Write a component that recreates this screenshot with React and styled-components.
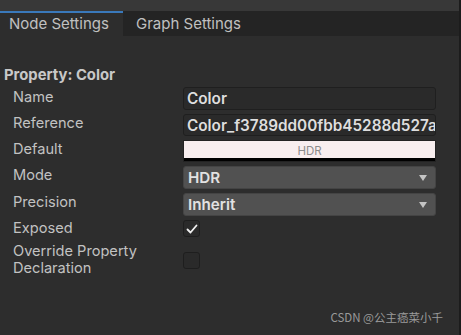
import React from 'react';
import styled, { createGlobalStyle } from 'styled-components';

const GlobalStyle = createGlobalStyle`
  html, body {
    margin: 0;
    padding: 0;
    background: #2d2d2d;
  }
  body {
    font-family: Inter, "Noto Sans", sans-serif;
  }
`;

const Window = styled.div`
  position: relative;
  width: 459px;
  height: 335px;
  background: #2d2d2d;
  border-right: 2px solid #1c1c1c;
  display: flex;
  flex-direction: column;
  overflow: hidden;
`;

const TopStrip = styled.div`
  height: 11px;
  background: #383838;
`;

const TabBar = styled.div`
  display: flex;
  height: 25px;
  background: #242424;
`;

const Tab = styled.div`
  box-sizing: border-box;
  width: ${(props) => props.width}px;
  padding-left: ${(props) => props.pad}px;
  display: flex;
  align-items: center;
  font-size: 15px;
  color: #c0c0c0;
  background: ${(props) => (props.active ? '#2d2d2d' : '#242424')};
  border-top: 2px solid ${(props) => (props.active ? '#3a79bb' : '#242424')};
  padding-bottom: 2px;
`;

const Content = styled.div`
  padding: 30px 0 0 4px;
  display: flex;
  flex-direction: column;
`;

const Heading = styled.div`
  font-size: 14.8px;
  font-weight: 700;
  color: #c8c8c8;
  line-height: 18px;
  margin-bottom: 3px;
`;

const Rows = styled.div`
  display: flex;
  flex-direction: column;
  gap: 4px;
`;

const Row = styled.div`
  display: flex;
  align-items: center;
  min-height: ${(props) => props.h || 22}px;
  margin-top: ${(props) => props.mt || 0}px;
`;

const Label = styled.div`
  box-sizing: border-box;
  width: 179px;
  padding-left: 9px;
  padding-right: 20px;
  font-size: 14.6px;
  line-height: 17px;
  color: #c2c2c2;
  margin-top: ${(props) => -(props.up || 0)}px;
`;

const TextField = styled.div`
  box-sizing: border-box;
  width: 253px;
  height: ${(props) => props.h || 23}px;
  background: #2a2a2a;
  border: 1px solid #1f1f1f;
  border-radius: 3px;
  padding: 0 3px;
  display: flex;
  align-items: center;
  font-size: 15.3px;
  font-weight: 600;
  color: #dedede;
  white-space: nowrap;
  overflow: hidden;
`;

const ColorField = styled.div`
  box-sizing: border-box;
  width: 253px;
  height: 22px;
  border: 1px solid #232323;
  display: flex;
  flex-direction: column;
`;

const Swatch = styled.div`
  flex: 1;
  background: #f8eeef;
  display: flex;
  justify-content: center;
  align-items: center;
  font-size: 11.5px;
  color: #8c8c8c;
  padding-top: 3px;
`;

const AlphaBar = styled.div`
  height: 4px;
  background: #000;
`;

const Dropdown = styled.div`
  box-sizing: border-box;
  width: 253px;
  height: 23px;
  background: #515151;
  border: 1px solid #444;
  border-radius: 3px;
  padding: 0 8px 0 4px;
  display: flex;
  align-items: center;
  justify-content: space-between;
  font-size: 15.2px;
  font-weight: 600;
  color: #e2e2e2;
`;

const Arrow = styled.span`
  width: 0;
  height: 0;
  border-left: 4.5px solid transparent;
  border-right: 4.5px solid transparent;
  border-top: 6px solid #c4c4c4;
`;

const Checkbox = styled.div`
  box-sizing: border-box;
  width: 17px;
  height: 17px;
  background: #2a2a2a;
  border: 1px solid #1e1e1e;
  border-radius: 3px;
  display: flex;
  align-items: center;
  justify-content: center;
`;

const Watermark = styled.div`
  position: absolute;
  right: 16px;
  bottom: 10px;
  font-size: 11.5px;
  color: #9a9a9a;
  font-family: "Noto Sans CJK SC", "Noto Sans", sans-serif;
`;

const Check = () => (
  <svg width="12" height="10" viewBox="0 0 12 10">
    <polyline points="1.5,5.5 4.5,8.5 10.5,1.5" fill="none" stroke="#f0f0f0" strokeWidth="1.8" strokeLinecap="round" strokeLinejoin="round" />
  </svg>
);

const App = () => {
  return (
    <>
      <GlobalStyle />
      <Window>
        <TopStrip />
        <TabBar>
          <Tab active width={123} pad={9}>Node Settings</Tab>
          <Tab width={137} pad={13}>Graph Settings</Tab>
        </TabBar>
        <Content>
          <Heading>Property: Color</Heading>
          <Rows>
            <Row>
              <Label up={3}>Name</Label>
              <TextField>Color</TextField>
            </Row>
            <Row>
              <Label up={3}>Reference</Label>
              <TextField h={22}>Color_f3789dd00fbb45288d527a3b8d6c5e41</TextField>
            </Row>
            <Row>
              <Label up={3}>Default</Label>
              <ColorField>
                <Swatch>HDR</Swatch>
                <AlphaBar />
              </ColorField>
            </Row>
            <Row>
              <Label up={5}>Mode</Label>
              <Dropdown>HDR<Arrow /></Dropdown>
            </Row>
            <Row>
              <Label up={4}>Precision</Label>
              <Dropdown>Inherit<Arrow /></Dropdown>
            </Row>
            <Row h={17}>
              <Label up={1}>Exposed</Label>
              <Checkbox><Check /></Checkbox>
            </Row>
            <Row h={34} mt={2}>
              <Label up={1}>Override Property Declaration</Label>
              <Checkbox />
            </Row>
          </Rows>
        </Content>
        <Watermark>CSDN @公主癌菜小千</Watermark>
      </Window>
    </>
  );
};

export default App;
